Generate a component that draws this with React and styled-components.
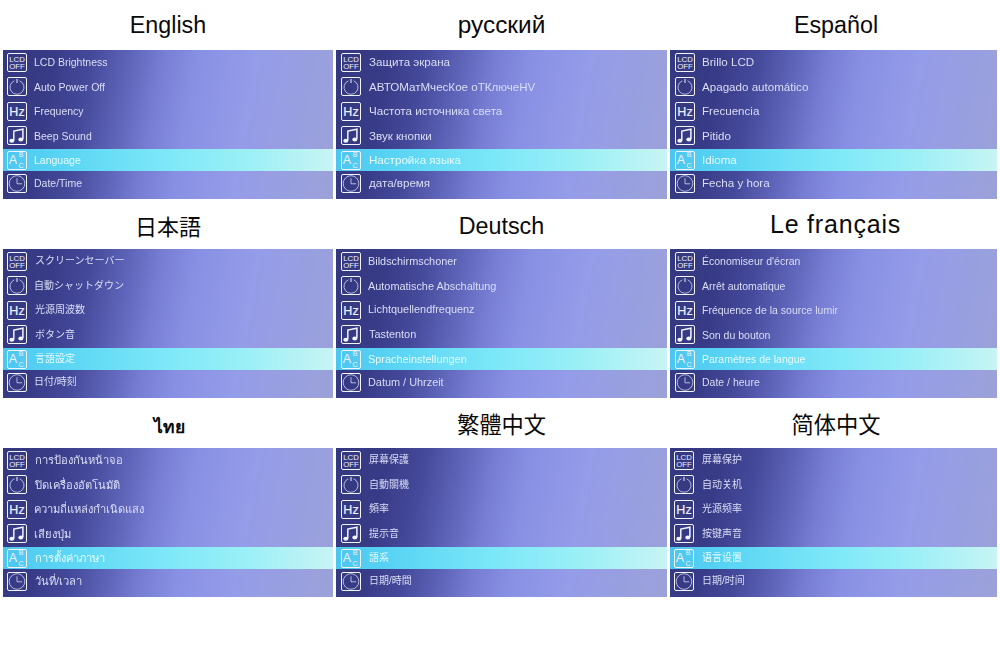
import React from 'react';
import styled, { createGlobalStyle } from 'styled-components';

const GlobalStyle = createGlobalStyle`
  html, body {
    margin: 0;
    padding: 0;
    background: #fff;
  }
`;

const Sheet = styled.div`
  width: 1000px;
  height: 647px;
  box-sizing: border-box;
  padding-left: 3px;
  display: grid;
  grid-template-columns: 330px 331px 327px;
  grid-template-rows: repeat(3, 199px);
  column-gap: 3px;
  font-family: 'Liberation Sans', 'Noto Sans CJK JP', sans-serif;
`;

const Block = styled.section`
  display: flex;
  flex-direction: column;
`;

const Title = styled.h2`
  height: 50px;
  margin: 0;
  display: flex;
  align-items: center;
  justify-content: center;
  padding-top: ${p => p.$drop || 0}px;
  padding-left: ${p => p.$shift || 0}px;
  box-sizing: border-box;
  color: #0a0a0a;
  font-weight: ${p => p.$weight || 400};
  font-size: ${p => p.$size || 23.3}px;
  letter-spacing: ${p => p.$track || 0}px;
`;

const Panel = styled.div`
  height: 149px;
  padding-bottom: 4px;
  box-sizing: border-box;
  display: flex;
  flex-direction: column;
  background: linear-gradient(100deg, #34387f 0%, #383c88 15%, #45499a 25%, #5c62b6 35%, #767dd2 45%, #8890e4 55%, #959ce8 72%, #9ba2d8 100%);
`;

const Row = styled.div`
  flex: ${p => (p.$active ? '0 0 22px' : p.$last ? '0 0 24px' : '0 0 24.5px')};
  margin-top: ${p => (p.$active ? 1 : 0)}px;
  display: flex;
  align-items: center;
  padding-left: ${p => p.$pad}px;
  background: ${p => (p.$active
    ? 'linear-gradient(90deg, #4cc6ee 0%, #5cd6f4 20%, #7ee8f8 50%, #9cf0f6 75%, #c8f4f4 100%)'
    : 'transparent')};
`;

const IconBox = styled.svg`
  width: 20px;
  height: 19px;
  flex: none;
  fill: none;
  stroke: #f2f4ff;
`;

const IconText = styled.text`
  fill: #eef0ff;
  stroke: ${p => (p.$heavy ? '#eef0ff' : 'none')};
  stroke-width: 0.2;
  font-family: 'Liberation Sans', sans-serif;
  font-size: ${p => p.$size}px;
  text-anchor: middle;
`;

const Label = styled.span`
  margin-left: ${p => 7 + (p.$dx || 0)}px;
  margin-top: ${p => p.$dy || 0}px;
  color: ${p => (p.$active ? '#e6fbff' : '#dadef6')};
  font-size: ${p => p.$size || 10.5}px;
  line-height: 12px;
  white-space: nowrap;
  filter: blur(0.3px);
`;

const Frame = () => <rect x="0.5" y="0.5" width="19" height="18" rx="1.5" />;

const LcdIcon = () => (
  <IconBox viewBox="0 0 20 19">
    <Frame />
    <IconText x="10" y="8.6" $size={7.8}>LCD</IconText>
    <IconText x="10" y="15.6" $size={7.8}>OFF</IconText>
  </IconBox>
);

const PowerIcon = () => (
  <IconBox viewBox="0 0 20 19">
    <Frame />
    <path d="M7.4 3.8 A7 7 0 1 0 12.6 3.8" strokeWidth="0.8" strokeOpacity="0.85" />
    <path d="M10 2 V6" strokeWidth="1" />
  </IconBox>
);

const HzIcon = () => (
  <IconBox viewBox="0 0 20 19">
    <Frame />
    <IconText x="10" y="14" $size={12.5} $heavy>Hz</IconText>
  </IconBox>
);

const NoteIcon = () => (
  <IconBox viewBox="0 0 20 19">
    <Frame />
    <path d="M6.8 14.6 V5 L15.9 3.2 V13" strokeWidth="1.5" />
    <ellipse cx="4.8" cy="14.8" rx="2.5" ry="2" fill="#f2f4ff" stroke="none" />
    <ellipse cx="13.8" cy="13.4" rx="2.5" ry="2" fill="#f2f4ff" stroke="none" />
  </IconBox>
);

const AbcIcon = () => (
  <IconBox viewBox="0 0 20 19">
    <Frame />
    <IconText x="6" y="13.2" $size={12.5}>A</IconText>
    <IconText x="14" y="6.4" $size={7}>B</IconText>
    <IconText x="14" y="17.4" $size={7}>C</IconText>
  </IconBox>
);

const ClockIcon = () => (
  <IconBox viewBox="0 0 20 19">
    <Frame />
    <circle cx="10" cy="9.5" r="7.8" strokeWidth="0.8" strokeOpacity="0.85" />
    <path d="M10 4.2 V9.8 H15.2" strokeWidth="0.8" strokeOpacity="0.85" />
  </IconBox>
);

const ICONS = [LcdIcon, PowerIcon, HzIcon, NoteIcon, AbcIcon, ClockIcon];

// an item is a string, or [text, dx, dy] where the label sits off its line
const LANGUAGES = [
  { title: 'English', pad: 4, items: ['LCD Brightness', 'Auto Power Off', 'Frequency', 'Beep Sound', 'Language', 'Date/Time'] },
  { title: 'русский', pad: 5, labelSize: 11.6, dx: 1, titleSize: 24.4, items: ['Защита экрана', 'АВТОМатМчесКое оТКлючеНV', 'Частота источника света', 'Звук кнопки', 'Настройка языка', 'дата/время'] },
  { title: 'Español', pad: 5, labelSize: 11.6, shift: 5, items: ['Brillo LCD', 'Apagado automático', 'Frecuencia', 'Pitido', 'Idioma', 'Fecha y hora'] },
  { title: '日本語', pad: 4, labelSize: 10, dx: 1, titleSize: 22, drop: 1, items: ['スクリーンセーバー', ['自動シャットダウン', -1, 0], '光源周波数', 'ボタン音', '言語設定', ['日付/時刻', -1, 0]] },
  { title: 'Deutsch', pad: 5, labelSize: 10.9, drop: 4, items: ['Bildschirmschoner', 'Automatische Abschaltung', ['Lichtquellendfrequenz', 0, -3], ['Tastenton', 1, -2], 'Spracheinstellungen', 'Datum / Uhrzeit'] },
  { title: 'Le français', pad: 5, titleSize: 25, track: 0.8, shift: 4, items: ['Économiseur d\'écran', 'Arrêt automatique', 'Fréquence de la source lumir', 'Son du bouton', 'Paramètres de langue', 'Date / heure'] },
  { title: 'ไทย', pad: 4, labelSize: 11.2, dx: 1, titleSize: 17.5, weight: 700, drop: 8, shift: 3, items: ['การป้องกันหน้าจอ', 'ปิดเครื่องอัตโนมัติ', ['ความถี่แหล่งกำเนิดแสง', -1, 0], ['เสียงปุ่ม', -1, 0], 'การตั้งค่าภาษา', 'วันที่/เวลา'] },
  { title: '繁體中文', pad: 5, labelSize: 10, dx: 1, titleSize: 22.3, items: ['屏幕保護', '自動關機', '頻率', '提示音', '語系', '日期/時間'] },
  { title: '简体中文', pad: 4, labelSize: 10, dx: 1, titleSize: 22.3, shift: 5, items: ['屏幕保护', '自动关机', '光源频率', '按键声音', '语言设置', '日期/时间'] },
];

const App = () => (
  <>
    <GlobalStyle />
    <Sheet>
      {LANGUAGES.map(lang => (
        <Block key={lang.title}>
          <Title $size={lang.titleSize} $track={lang.track} $drop={lang.drop} $shift={lang.shift} $weight={lang.weight}>
            {lang.title}
          </Title>
          <Panel>
            {lang.items.map((item, i) => {
              const Icon = ICONS[i];
              const [text, dx = 0, dy = 0] = Array.isArray(item) ? item : [item];
              return (
                <Row key={text} $active={i === 4} $last={i === 5} $pad={lang.pad}>
                  <Icon />
                  <Label $active={i === 4} $size={lang.labelSize} $dx={(lang.dx || 0) + dx} $dy={dy}>
                    {text}
                  </Label>
                </Row>
              );
            })}
          </Panel>
        </Block>
      ))}
    </Sheet>
  </>
);

export default App;
